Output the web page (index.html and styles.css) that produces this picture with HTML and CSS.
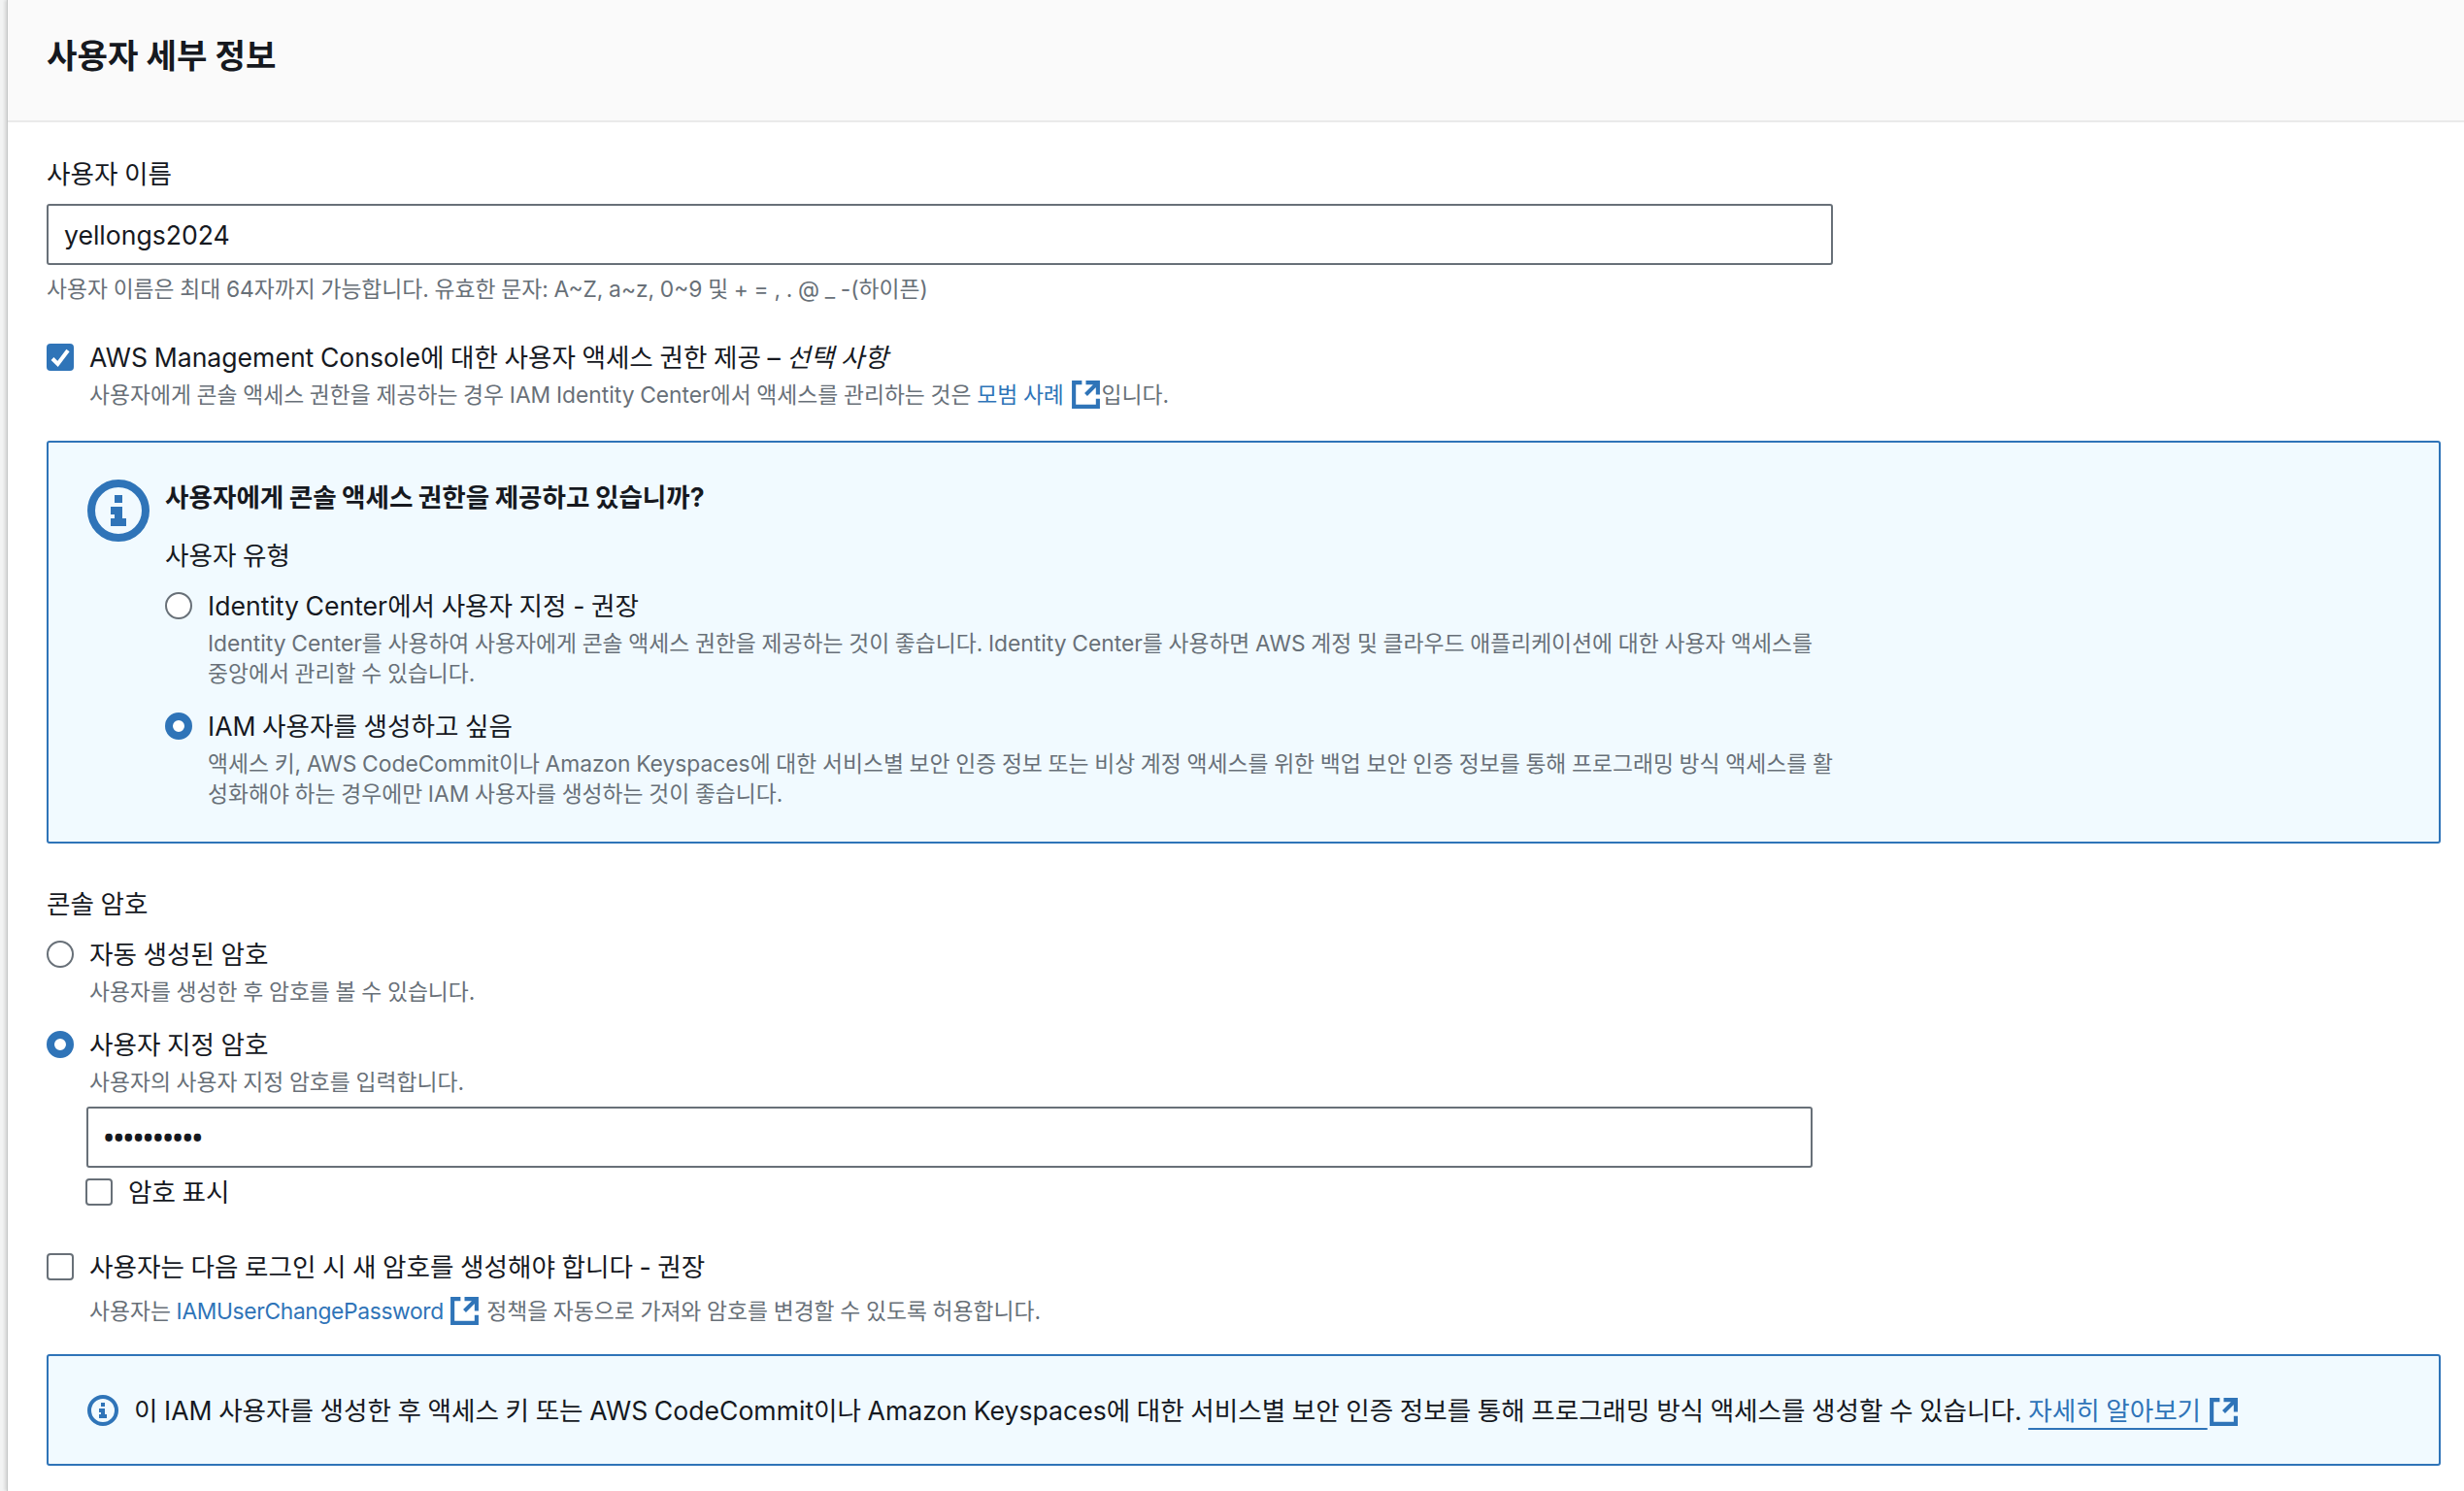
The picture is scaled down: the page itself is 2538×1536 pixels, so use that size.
FILE: index.html
```html
<!DOCTYPE html>
<html lang="ko">
<head>
<meta charset="utf-8">
<title>사용자 세부 정보</title>
<link rel="stylesheet" href="styles.css">
</head>
<body>
<svg class="defs" width="0" height="0" aria-hidden="true">
  <symbol id="ext" viewBox="0 0 16 16"><path d="M14 8.01v-6H8M14.02 2 8 8.02M6 2.01H2v12h12V10"/></symbol>
  <symbol id="info" viewBox="0 0 16 16"><circle cx="8" cy="8" r="7"/><path d="M8 4v2M6 8h2v3M6 11h4"/></symbol>
  <symbol id="tick" viewBox="0 0 28 28"><path d="M6 15.5 11.5 21 22 7"/></symbol>
</svg>
<main class="card">
  <header class="card-header"><h2 class="card-title">사용자 세부 정보</h2></header>
  <div class="card-body">
    <label class="field-label">사용자 이름</label>
    <input class="text-input username" type="text" value="yellongs2024">
    <p class="hint username-hint">사용자 이름은 최대 64자까지 가능합니다. 유효한 문자: A~Z, a~z, 0~9 및 + = , . @ _ -(하이픈)</p>

    <div class="option console-access">
      <span class="box checked"><svg class="tick"><use href="#tick"/></svg></span>
      <span>AWS Management Console에 대한 사용자 액세스 권한 제공 – <em>선택 사항</em></span>
    </div>
    <p class="hint indent hint-near">사용자에게 콘솔 액세스 권한을 제공하는 경우 IAM Identity Center에서 액세스를 관리하는 것은 <a class="link">모범 사례</a> <svg class="ext"><use href="#ext"/></svg>입니다.</p>

    <section class="alert alert-large">
      <svg class="icon-large"><use href="#info"/></svg>
      <div class="alert-content">
        <h3 class="alert-title">사용자에게 콘솔 액세스 권한을 제공하고 있습니까?</h3>
        <div class="field-label user-type">사용자 유형</div>
        <div class="option first-radio"><span class="radio"></span><span>Identity Center에서 사용자 지정 - 권장</span></div>
        <p class="hint indent desc">Identity Center를 사용하여 사용자에게 콘솔 액세스 권한을 제공하는 것이 좋습니다. Identity Center를 사용하면 AWS 계정 및 클라우드 애플리케이션에 대한 사용자 액세스를<br>중앙에서 관리할 수 있습니다.</p>
        <div class="option next-radio"><span class="radio on"></span><span>IAM 사용자를 생성하고 싶음</span></div>
        <p class="hint indent desc">액세스 키, AWS CodeCommit이나 Amazon Keyspaces에 대한 서비스별 보안 인증 정보 또는 비상 계정 액세스를 위한 백업 보안 인증 정보를 통해 프로그래밍 방식 액세스를 활<br>성화해야 하는 경우에만 IAM 사용자를 생성하는 것이 좋습니다.</p>
      </div>
    </section>

    <div class="field-label password-label">콘솔 암호</div>
    <div class="option first-pw"><span class="radio"></span><span>자동 생성된 암호</span></div>
    <p class="hint indent hint-near">사용자를 생성한 후 암호를 볼 수 있습니다.</p>
    <div class="option next-radio"><span class="radio on"></span><span>사용자 지정 암호</span></div>
    <p class="hint indent hint-near">사용자의 사용자 지정 암호를 입력합니다.</p>
    <input class="text-input password" type="password" value="aaaaaaaaaa">
    <div class="option show-pw"><span class="box"></span><span>암호 표시</span></div>
    <div class="option must-change"><span class="box"></span><span>사용자는 다음 로그인 시 새 암호를 생성해야 합니다 - 권장</span></div>
    <p class="hint indent policy-hint">사용자는 <a class="link tight">IAMUserChangePassword</a> <svg class="ext"><use href="#ext"/></svg> 정책을 자동으로 가져와 암호를 변경할 수 있도록 허용합니다.</p>

    <section class="alert alert-small">
      <svg class="icon-small"><use href="#info"/></svg>
      <p class="alert-text">이 IAM 사용자를 생성한 후 액세스 키 또는 AWS CodeCommit이나 Amazon Keyspaces에 대한 서비스별 보안 인증 정보를 통해 프로그래밍 방식 액세스를 생성할 수 있습니다. <a class="link underlined">자세히 알아보기 </a><svg class="ext"><use href="#ext"/></svg></p>
    </section>
  </div>
</main>
</body>
</html>
```
FILE: styles.css
```css
* { box-sizing: border-box; }
html, body { margin: 0; padding: 0; }
body {
  background: #f2f3f3;
  color: #16191f;
  font-family: Inter, "Noto Sans CJK KR", sans-serif;
  font-size: 26.6px;
  line-height: 36px;
  word-spacing: -0.9px;
  min-height: 1536px;
}
.defs { position: absolute; }
.card {
  margin-left: 7px;
  border-left: 1px solid #c4c6c6;
  box-shadow: -2px 0 3px rgba(0, 0, 0, .12);
  background: #fff;
  min-height: 1536px;
}
.card-header {
  height: 126px;
  background: #fafafa;
  border-bottom: 2px solid #eaeaea;
  padding: 0 0 0 40px;
  display: flex;
  align-items: center;
}
.card-title { margin: 0 0 8px; font-size: 34.2px; font-weight: 700; line-height: 44px; word-spacing: 0; }
.card-body { padding: 35px 24px 0 40px; }
.field-label { display: block; }
.text-input {
  display: block;
  height: 63px;
  border: 2px solid #687078;
  border-radius: 3px;
  background: #fff;
  color: #16191f;
  font: inherit;
  padding: 0 16px;
  outline: none;
}
.username { width: 1840px; margin-top: 13px; }
.hint { margin: 0; color: #687078; font-size: 22.8px; line-height: 30px; word-spacing: -0.7px; }
.username-hint { margin-top: 10px; }
.indent { padding-left: 44px; }
.hint-near { margin-top: 6px; }
.option { display: flex; align-items: center; gap: 16px; }
.console-access { margin-top: 37px; }
.box, .radio { flex: none; display: block; width: 28px; height: 28px; background: #fff; border: 2px solid #687078; }
.box { border-radius: 4px; }
.box.checked { background: #2f74b8; border: 0; }
.radio { border-radius: 50%; }
.radio.on { border: 8px solid #2f74b8; }
.tick { display: block; width: 28px; height: 28px; fill: none; stroke: #fff; stroke-width: 4; }
em { font-style: italic; }
.link { color: #2f74b8; }
.tight { letter-spacing: -.35px; }
.underlined { text-decoration: underline; text-underline-offset: 8px; text-decoration-thickness: 2px; }
.ext {
  display: inline-block;
  width: 33px;
  height: 33px;
  margin: -8px 0;
  vertical-align: 0;
  fill: none;
  stroke: #2f74b8;
  stroke-width: 2;
}
.alert {
  display: flex;
  width: 2466px;
  background: #f1faff;
  border: 2px solid #2f74b8;
  border-radius: 3px;
}
.alert-large { margin-top: 32px; height: 415px; padding: 38px 0 0 40px; gap: 16px; }
.icon-large { flex: none; width: 64px; height: 64px; fill: none; stroke: #2f74b8; stroke-width: 2; }
.alert-content { flex: 1; }
.alert-title { margin: 0; font-size: 26.6px; font-weight: 700; line-height: 36px; }
.user-type { margin-top: 24px; }
.first-radio { margin-top: 16px; }
.next-radio { margin-top: 21px; }
.desc { line-height: 31px; margin: 5px 0 1px; }
.password-label { margin-top: 44px; }
.first-pw { margin-top: 16px; }
.password { width: 1778px; margin: 10px 0 0 41px; font-family: "Noto Sans", sans-serif; font-size: 27px; font-weight: 700; }
.show-pw { margin: 7px 0 0 40px; }
.must-change { margin-top: 41px; }
.policy-hint { margin-top: 13px; }
.alert-small { margin-top: 29px; height: 115px; padding: 0 0 0 40px; align-items: center; gap: 16px; }
.icon-small { flex: none; width: 32px; height: 32px; fill: none; stroke: #2f74b8; stroke-width: 2; }
.alert-text { margin: 0; white-space: nowrap; }
```
